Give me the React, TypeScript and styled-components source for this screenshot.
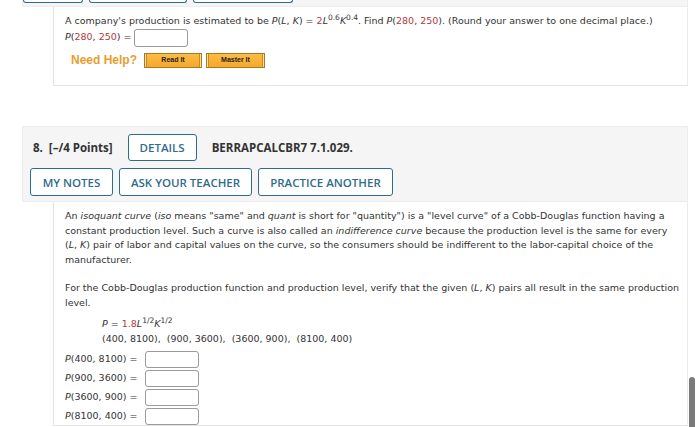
import React from "react";
import styled, { createGlobalStyle } from "styled-components";

const Global = createGlobalStyle`
  html, body { margin: 0; padding: 0; background: #fff; }
  body { width: 700px; height: 427px; overflow: hidden; }
`;

const Page = styled.div`
  width: 666px;
  padding-left: 22px;
  display: flex;
  flex-direction: column;
`;

const HeaderPanel = styled.div`
  background: #f5f5f5;
  border: 1px solid #ececec;
  display: flex;
  flex-direction: column;
  gap: 7px;
  padding: 7px 0 5px 0;
`;

const ClippedHeader = styled.div`
  background: #f5f5f5;
  border: 1px solid #ececec;
  border-top: none;
  height: 7px;
  box-sizing: border-box;
  padding-bottom: 3px;
  display: flex;
  align-items: flex-end;
  gap: 6px;
`;

const Stub = styled.div<{ $w: number }>`
  width: ${(p) => p.$w}px;
  height: 4px;
  box-sizing: border-box;
  border: 1.5px solid #2f6c8c;
  border-top: none;
  border-radius: 0 0 3px 3px;
  background: #fff;
`;

const HeaderRow = styled.div<{ $indent: number }>`
  display: flex;
  align-items: center;
  gap: 6px;
  padding-left: ${(p) => p.$indent}px;
`;

const Title = styled.span`
  font-family: "Open Sans", sans-serif;
  font-weight: 700;
  font-size: 11.5px;
  color: #333;
  margin-right: 9px;
  white-space: pre;
`;

const Code = styled.span`
  font-family: "Open Sans", sans-serif;
  font-weight: 700;
  font-size: 11.5px;
  color: #333;
  margin-left: 9px;
`;

const OutlineButton = styled.button<{ $w: number; $h: number }>`
  width: ${(p) => p.$w}px;
  height: ${(p) => p.$h}px;
  flex-shrink: 0;
  background: #fff;
  border: 1.5px solid #2f6c8c;
  border-radius: 3px;
  color: #2f6c8c;
  font-family: "Open Sans", sans-serif;
  font-weight: 600;
  font-size: 11.5px;
  padding: 0;
  display: flex;
  align-items: center;
  justify-content: center;
`;

const Body = styled.div<{ $h?: number }>`
  margin-left: 31px;
  width: 635px;
  border-left: 1px solid #e3e3e3;
  border-right: 1px solid #ececec;
  border-bottom: 1px solid #e6e6e6;
  background: #fff;
  padding: 7px 4px 0 11px;
  box-sizing: border-box;
  ${(p) => (p.$h ? `height: ${p.$h}px;` : "")}
  font-family: "DejaVu Sans", Verdana, sans-serif;
  font-size: 9.5px;
  color: #333;
  line-height: 14.5px;
`;

const Para = styled.p`
  margin: 0;
`;

const NoWrap = styled.span`
  white-space: nowrap;
`;

const Red = styled.span`
  color: #b13a3f;
`;

const Sup = styled.sup`
  font-size: 7.5px;
  line-height: 0;
  vertical-align: 0;
  position: relative;
  top: -4px;
`;

const AnswerLine = styled.div<{ $gap: number }>`
  display: flex;
  align-items: center;
  gap: 3px;
  margin-top: ${(p) => p.$gap}px;
`;

const Label = styled.span<{ $w?: number }>`
  white-space: pre;
  ${(p) => (p.$w ? `width: ${p.$w}px;` : "")}
`;

const AnswerBox = styled.span<{ $h: number }>`
  display: inline-block;
  width: 52px;
  height: ${(p) => p.$h}px;
  border: 1px solid #9a9a9a;
  border-radius: 3px;
  background: #fff;
  flex-shrink: 0;
`;

const HelpRow = styled.div`
  display: flex;
  align-items: center;
  gap: 4px;
  margin-top: 6px;
  padding-left: 6px;
`;

const NeedHelp = styled.span`
  font-family: "Liberation Sans", Arial, sans-serif;
  font-weight: 700;
  font-size: 12px;
  color: #e89d2e;
  margin-right: 3px;
`;

const GoldButton = styled.span<{ $w: number }>`
  width: ${(p) => p.$w}px;
  height: 15px;
  box-sizing: border-box;
  border: 1px solid #a77a26;
  box-shadow: inset 1px 0 0 #fde3a0, inset -1px 0 0 #fde3a0, inset 2px 0 0 #c98a1f, inset -2px 0 0 #c98a1f;
  background: linear-gradient(#fbbc46, #f6a82a);
  font-family: "Liberation Sans", Arial, sans-serif;
  font-weight: 700;
  font-size: 7px;
  color: #222;
  display: flex;
  align-items: center;
  justify-content: center;
`;

const Spacer = styled.div<{ $h: number }>`
  height: ${(p) => p.$h}px;
`;

const Formula = styled.div`
  padding-left: 37px;
  margin-top: 7px;
`;

const ScrollThumb = styled.div`
  position: fixed;
  left: 689px;
  top: 377px;
  width: 6px;
  height: 60px;
  border-radius: 3px;
  background: #7b7b7b;
`;

const answers = [
  { label: "(400, 8100)", gap: 5 },
  { label: "(900, 3600)", gap: 2 },
  { label: "(3600, 900)", gap: 2 },
  { label: "(8100, 400)", gap: 2 },
];

const LK = () => (
  <NoWrap>
    (<i>L</i>, <i>K</i>)
  </NoWrap>
);

export default function App() {
  return (
    <>
      <Global />
      <Page>
        <ClippedHeader>
          <Stub $w={60} />
          <Stub $w={98} />
          <Stub $w={100} />
        </ClippedHeader>
        <Body $h={79}>
          <Para>
            A company's production is estimated to be <i>P</i>(<i>L</i>, <i>K</i>) = <Red>2</Red>
            <i>L</i>
            <Sup>0.6</Sup>
            <i>K</i>
            <Sup>0.4</Sup>. Find <i>P</i>(<Red>280</Red>, <Red>250</Red>). (Round your answer to one decimal place.)
          </Para>
          <AnswerLine $gap={0}>
            <Label>
              <i>P</i>(<Red>280</Red>, <Red>250</Red>) =
            </Label>
            <AnswerBox $h={16} />
          </AnswerLine>
          <HelpRow>
            <NeedHelp>Need Help?</NeedHelp>
            <GoldButton $w={58}>Read It</GoldButton>
            <GoldButton $w={59}>Master It</GoldButton>
          </HelpRow>
        </Body>
        <Spacer $h={40} />
        <HeaderPanel>
          <HeaderRow $indent={10}>
            <Title>8.  [–/4 Points]</Title>
            <OutlineButton $w={69} $h={27}>DETAILS</OutlineButton>
            <Code>BERRAPCALCBR7 7.1.029.</Code>
          </HeaderRow>
          <HeaderRow $indent={7}>
            <OutlineButton $w={83} $h={28}>MY NOTES</OutlineButton>
            <OutlineButton $w={133} $h={28}>ASK YOUR TEACHER</OutlineButton>
            <OutlineButton $w={135} $h={28}>PRACTICE ANOTHER</OutlineButton>
          </HeaderRow>
        </HeaderPanel>
        <Body>
          <Para>
            An <i>isoquant curve</i> (<i>iso</i> means "same" and <i>quant</i> is short for "quantity") is a "level curve" of a
            Cobb-Douglas function having a constant production level. Such a curve is also called an{" "}
            <i>indifference curve</i> because the production level is the same for every <LK /> pair of
            labor and capital values on the curve, so the consumers should be indifferent to the labor-capital choice of
            the manufacturer.
          </Para>
          <Spacer $h={14} />
          <Para>
            For the Cobb-Douglas production function and production level, verify that the given <LK /> pairs all
            result in the same production level.
          </Para>
          <Formula>
            <div>
              <i>P</i> = <Red>1.8</Red>
              <i>L</i>
              <Sup>1/2</Sup>
              <i>K</i>
              <Sup>1/2</Sup>
            </div>
            <div>(400, 8100),&nbsp; (900, 3600),&nbsp; (3600, 900),&nbsp; (8100, 400)</div>
          </Formula>
          {answers.map((a) => (
            <AnswerLine key={a.label} $gap={a.gap}>
              <Label $w={77}>
                <i>P</i>
                {a.label} =
              </Label>
              <AnswerBox $h={15} />
            </AnswerLine>
          ))}
        </Body>
      </Page>
      <ScrollThumb />
    </>
  );
}
